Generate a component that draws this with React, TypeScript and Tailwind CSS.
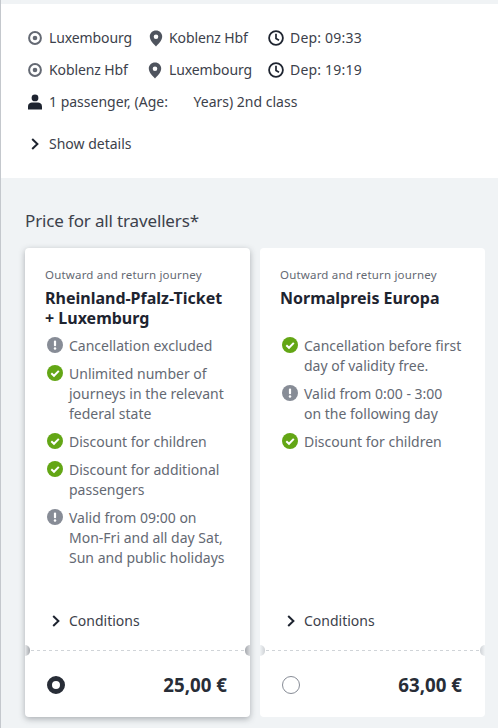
const FONT = "font-['Noto_Sans',sans-serif]";

function Origin() {
    return (
        <svg width="14" height="14" viewBox="0 0 14 14" className="shrink-0">
            <circle cx="7" cy="7" r="5.9" fill="none" stroke="#646973" strokeWidth="2" />
            <circle cx="7" cy="7" r="2.3" fill="#646973" />
        </svg>
    );
}

function Pin() {
    return (
        <svg width="14" height="17" viewBox="0 0 14 17" className="shrink-0">
            <path fillRule="evenodd" fill="#4f545e" d="M7 0.5C3.4 0.5 0.8 3.2 0.8 6.6C0.8 10.6 5 14.6 7 16.5C9 14.6 13.2 10.6 13.2 6.6C13.2 3.2 10.6 0.5 7 0.5ZM7 4.4A2.3 2.3 0 1 1 7 9A2.3 2.3 0 1 1 7 4.4Z" />
        </svg>
    );
}

function Clock() {
    return (
        <svg width="16" height="16" viewBox="0 0 16 16" className="shrink-0">
            <circle cx="8" cy="8" r="6.9" fill="none" stroke="#1e2430" strokeWidth="1.8" />
            <path d="M8 3.8V8.4L11 10.2" fill="none" stroke="#1e2430" strokeWidth="1.7" />
        </svg>
    );
}

function Person() {
    return (
        <svg width="14" height="16" viewBox="0 0 14 16" className="shrink-0">
            <circle cx="7" cy="3.9" r="3.4" fill="#1e2430" />
            <path d="M0 15.6V12.4C0 9.8 2.2 8.6 4 8.6H10C11.8 8.6 14 9.8 14 12.4V15.6Z" fill="#1e2430" />
        </svg>
    );
}

function Chevron({ className }: { className?: string }) {
    return (
        <svg width="8" height="12" viewBox="0 0 8 12" className={`shrink-0 ${className ?? ''}`}>
            <path d="M1.2 1L6.4 6L1.2 11" fill="none" stroke="#1e2430" strokeWidth="2" />
        </svg>
    );
}

function Ok() {
    return (
        <svg width="16" height="16" viewBox="0 0 16 16" className="shrink-0 mt-[1px]">
            <circle cx="8" cy="8" r="8" fill="#63a615" />
            <path d="M4.3 8.2L7 10.8L11.8 5.9" fill="none" stroke="#fff" strokeWidth="2" />
        </svg>
    );
}

function Warn() {
    return (
        <svg width="16" height="16" viewBox="0 0 16 16" className="shrink-0 mt-[1px]">
            <circle cx="8" cy="8" r="8" fill="#878c96" />
            <rect x="6.9" y="3.4" width="2.2" height="5.8" rx="1" fill="#fff" />
            <circle cx="8" cy="11.4" r="1.25" fill="#fff" />
        </svg>
    );
}

function Feature({ ok, children }: { ok: boolean; children: React.ReactNode }) {
    return (
        <li className="flex gap-[6px] pl-[2px] text-[14px] leading-[20px] text-[#646973]">
            {ok ? <Ok /> : <Warn />}
            <span>{children}</span>
        </li>
    );
}

function Card({ title, features, price, selected, shadow }: {
    title: React.ReactNode;
    features: { ok: boolean; text: React.ReactNode }[];
    price: string;
    selected: boolean;
    shadow: boolean;
}) {
    return (
        <div className={`relative w-[225px] h-[469px] bg-white rounded-[4px] flex flex-col ${shadow ? 'shadow-[0_2px_6px_rgba(40,45,55,0.35)]' : ''}`}>
            <div className="flex-1 flex flex-col pt-[19px] px-[20px]">
                <p className="text-[11.5px] leading-[16px] text-[#646973] tracking-[0.18px]">Outward and return journey</p>
                <h3 className="mt-[5px] h-[40px] text-[16px] leading-[20px] font-bold text-[#1e2430]">{title}</h3>
                <ul className="flex flex-col gap-[8px] mt-[8px]">
                    {features.map((f, i) => (
                        <Feature key={i} ok={f.ok}>{f.text}</Feature>
                    ))}
                </ul>
                <div className="mt-auto mb-[19px] flex items-center gap-[9px] text-[14px] leading-[20px] text-[#3c414b]">
                    <Chevron className="ml-[7px]" />
                    <span>Conditions</span>
                </div>
            </div>
            {/* Tear line with notches */}
            <div className="relative h-px bg-[repeating-linear-gradient(90deg,#d0d4d8_0_3px,transparent_3px_6px)]">
                <span className={`absolute left-0 -top-[5px] w-[5px] h-[11px] rounded-r-full bg-linear-to-r ${shadow ? 'from-[#e8eaec] to-[#a4a7ac]' : 'from-[#f0f3f5] to-[#cfd2d6]'}`} />
                <span className={`absolute right-0 -top-[5px] w-[5px] h-[11px] rounded-l-full bg-linear-to-l ${shadow ? 'from-[#d8dadd] to-[#a4a7ac]' : 'from-[#f0f3f5] to-[#cfd2d6]'}`} />
            </div>
            <div className="h-[66px] pt-[1px] flex items-center justify-between pl-[22px] pr-[23px]">
                {selected
                    ? <span className="w-[18px] h-[18px] rounded-full border-[5px] border-[#282d37] bg-white" />
                    : <span className="w-[18px] h-[18px] rounded-full border border-[#878c96] bg-white" />}
                <span className="text-[18.7px] leading-[28px] font-bold text-[#282d37]">{price}</span>
            </div>
        </div>
    );
}

export default function App() {
    return (
        <div className={`${FONT} w-[498px] h-[728px] overflow-hidden bg-[#f0f3f5] border-l border-[#c4c8cd]`}>
            {/* Journey summary */}
            <div className="mt-[4px] h-[174px] bg-white pt-[24px] pl-[27px] text-[14px] leading-[20px] text-[#3c414b]">
                <div className="flex items-center h-[20px]">
                    <Origin />
                    <span className="ml-[7px] w-[100px] tracking-[-0.1px]">Luxembourg</span>
                    <Pin />
                    <span className="ml-[6px] w-[99px] tracking-[-0.1px]">Koblenz Hbf</span>
                    <Clock />
                    <span className="ml-[6px] tracking-[0.2px]">Dep: 09:33</span>
                </div>
                <div className="flex items-center h-[20px] mt-[12px]">
                    <Origin />
                    <span className="ml-[7px] w-[99px] tracking-[-0.1px]">Koblenz Hbf</span>
                    <Pin />
                    <span className="ml-[7px] w-[99px] tracking-[-0.1px]">Luxembourg</span>
                    <Clock />
                    <span className="ml-[6px] tracking-[0.2px]">Dep: 19:19</span>
                </div>
                <div className="flex items-center h-[20px] mt-[12px]">
                    <Person />
                    <span className="ml-[7px]">1 passenger, (Age: <span className="ml-[22px]">Years) 2nd class</span></span>
                </div>
                <div className="flex items-center h-[20px] mt-[22px] gap-[10px]">
                    <Chevron className="ml-[3px]" />
                    <span>Show details</span>
                </div>
            </div>

            {/* Offers */}
            <div className="pt-[30px] pl-[24px]">
                <h2 className="text-[17px] leading-[26px] tracking-[-0.15px] text-[#3c414b]">Price for all travellers*</h2>
                <div className="flex gap-[10px] mt-[14px]">
                    <Card
                        shadow
                        selected
                        price="25,00 €"
                        title={<>Rheinland-Pfalz-Ticket<br />+ Luxemburg</>}
                        features={[
                            { ok: false, text: 'Cancellation excluded' },
                            { ok: true, text: <>Unlimited number of<br />journeys in the relevant<br />federal state</> },
                            { ok: true, text: 'Discount for children' },
                            { ok: true, text: <>Discount for additional<br />passengers</> },
                            { ok: false, text: <>Valid from 09:00 on<br />Mon-Fri and all day Sat,<br />Sun and public holidays</> },
                        ]}
                    />
                    <Card
                        shadow={false}
                        selected={false}
                        price="63,00 €"
                        title="Normalpreis Europa"
                        features={[
                            { ok: true, text: <>Cancellation before first<br />day of validity free.</> },
                            { ok: false, text: <>Valid from 0:00 - 3:00<br />on the following day</> },
                            { ok: true, text: 'Discount for children' },
                        ]}
                    />
                </div>
            </div>
        </div>
    );
}
